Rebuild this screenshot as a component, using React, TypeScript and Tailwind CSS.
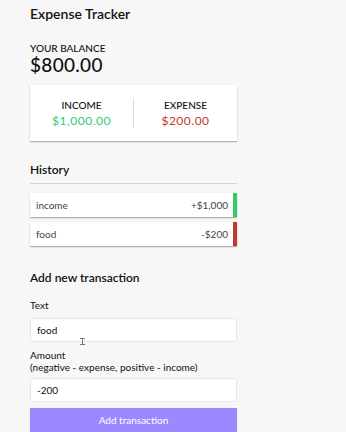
import React from 'react';

type Transaction = { id: number; text: string; amount: number };

const transactions: Transaction[] = [
  { id: 1, text: 'income', amount: 1000 },
  { id: 2, text: 'food', amount: -200 }
];

const App: React.FC = () => {
  return (
    <div className="min-h-screen bg-[#f7f7f8] font-['Lato',sans-serif] text-[#111]">
      <div className="ml-[30px] w-[207px] pt-[4px]">
        <h2 className="text-[14px] leading-[19px] font-semibold">Expense Tracker</h2>

        <h4 className="mt-[19px] text-[10px] leading-[12px] font-medium uppercase">Your Balance</h4>
        <h1 className="text-[19px] leading-[22px] font-medium tracking-[0.3px]">$800.00</h1>

        {/* income / expense card */}
        <div className="mt-[9px] flex bg-white py-[13px] shadow-[0_1px_2px_rgba(0,0,0,0.12),0_1px_1px_rgba(0,0,0,0.2)]">
          <div className="flex-1 border-r border-[#dedede] text-center">
            <h4 className="text-[10px] leading-[14px] font-medium uppercase">Income</h4>
            <p className="mt-[2px] text-[12px] leading-[14px] tracking-[0.5px] text-[#2ecc71]">$1,000.00</p>
          </div>
          <div className="flex-1 text-center">
            <h4 className="text-[10px] leading-[14px] font-medium uppercase">Expense</h4>
            <p className="mt-[2px] text-[12px] leading-[14px] tracking-[0.5px] text-[#c0392b]">$200.00</p>
          </div>
        </div>

        <h3 className="mt-[21px] border-b border-[#d4d4d4] pb-[5px] text-[12px] leading-[16px] font-semibold">History</h3>
        <ul className="mt-[9px] flex flex-col gap-[5px]">
          {transactions.map(t => (
            <li
              key={t.id}
              className={`flex h-[24px] items-center justify-between bg-white pl-[6px] pr-[5px] text-[10px] text-[#444] shadow-[0_1px_2px_rgba(0,0,0,0.12),0_1px_1px_rgba(0,0,0,0.2)] border-r-[4px] ${
                t.amount < 0 ? 'border-[#c0392b]' : 'border-[#2ecc71]'
              }`}
            >
              {t.text}
              <span>
                {t.amount < 0 ? '-' : '+'}${Math.abs(t.amount).toLocaleString('en-US')}
              </span>
            </li>
          ))}
        </ul>

        <h3 className="mt-[24px] text-[12px] leading-[16px] font-semibold">Add new transaction</h3>

        <form className="mt-[13px]" onSubmit={e => e.preventDefault()}>
          <label className="block text-[10px] leading-[12px]">Text</label>
          <div className="relative mt-[7px]">
            <input
              type="text"
              defaultValue="food"
              className="block h-[24px] w-full rounded-[2px] border border-[#e6e6e6] bg-white px-[6px] text-[10px] text-[#111] outline-none"
            />
            {/* mouse text cursor */}
            <span className="pointer-events-none absolute left-[52px] top-[20px] h-[7px] w-[1px] bg-[#777]" />
            <span className="pointer-events-none absolute left-[50px] top-[20px] h-[1px] w-[5px] bg-[#777]" />
            <span className="pointer-events-none absolute left-[50px] top-[26px] h-[1px] w-[5px] bg-[#777]" />
          </div>

          <label className="mt-[7px] block text-[10px] leading-[12px]">
            Amount
            <br />
            (negative - expense, positive - income)
          </label>
          <input
            type="number"
            defaultValue={-200}
            className="mt-[5px] block h-[24px] w-full rounded-[2px] border border-[#e6e6e6] bg-white px-[6px] text-[10px] text-[#111] outline-none"
          />

          <button
            type="submit"
            className="mt-[6px] block h-[25px] w-full bg-[#9c88ff] text-[10px] text-white shadow-[0_1px_2px_rgba(0,0,0,0.12)]"
          >
            Add transaction
          </button>
        </form>
      </div>
    </div>
  );
};

export default App;
